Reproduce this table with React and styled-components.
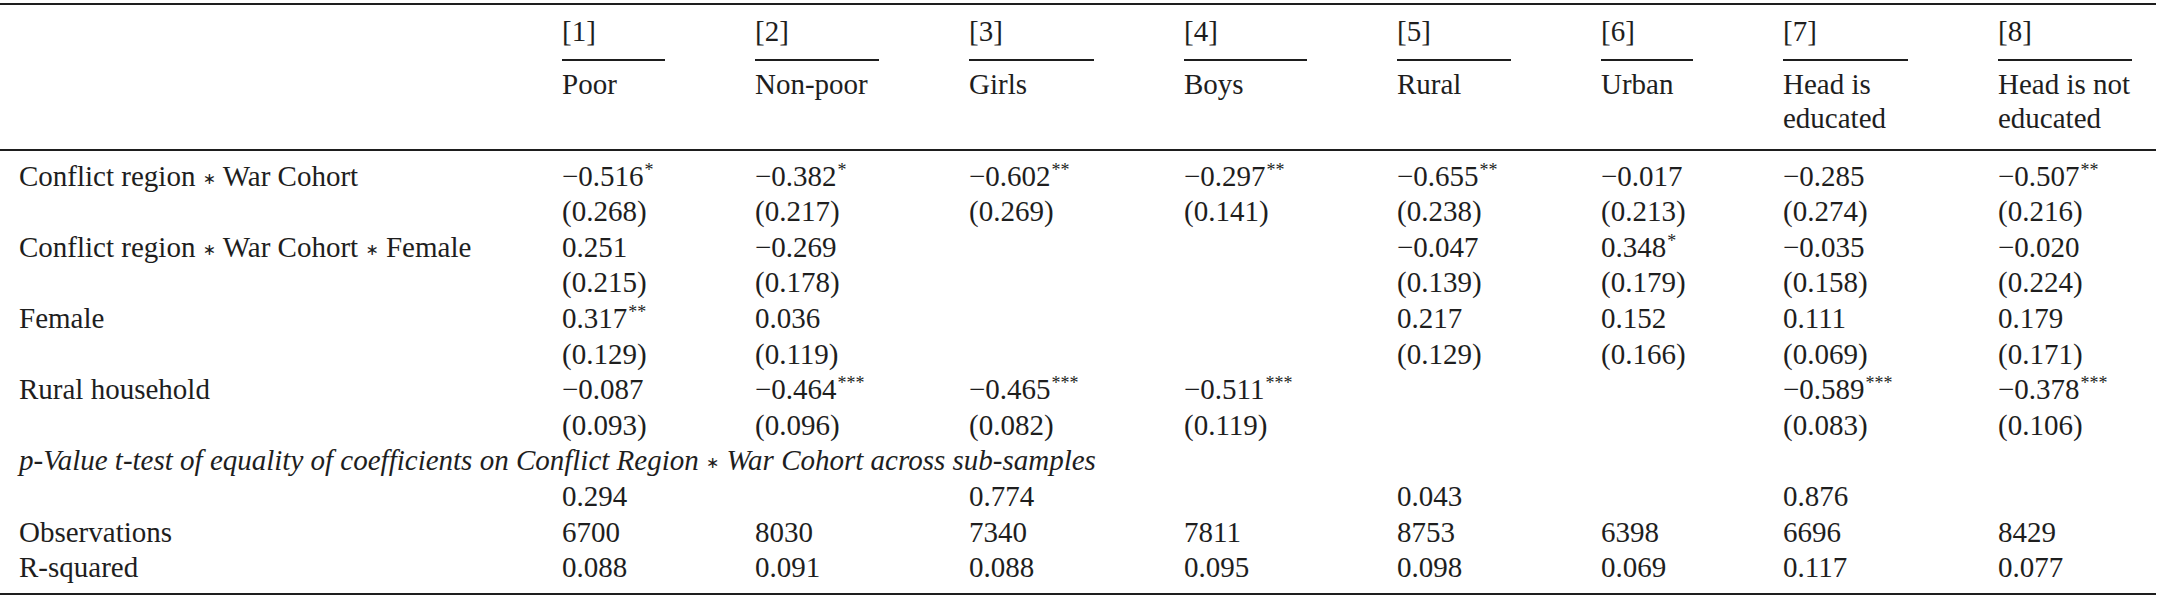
import styled, { createGlobalStyle } from "styled-components";

const GlobalStyle = createGlobalStyle`
  html, body {
    margin: 0;
    padding: 0;
    background: #ffffff;
  }
`;

const columns = [
  { num: "[1]", lines: ["Poor"], width: 103 },
  { num: "[2]", lines: ["Non-poor"], width: 124 },
  { num: "[3]", lines: ["Girls"], width: 125 },
  { num: "[4]", lines: ["Boys"], width: 123 },
  { num: "[5]", lines: ["Rural"], width: 114 },
  { num: "[6]", lines: ["Urban"], width: 92 },
  { num: "[7]", lines: ["Head is", "educated"], width: 125 },
  { num: "[8]", lines: ["Head is not", "educated"], width: 134 },
];

const template = `472px ${columns.map((c) => c.width + "px").join(" ")}`;

// each value is [number, stars]
const rows = [
  {
    label: ["Conflict region", "War Cohort"],
    values: [["−0.516", 1], ["−0.382", 1], ["−0.602", 2], ["−0.297", 2], ["−0.655", 2], ["−0.017"], ["−0.285"], ["−0.507", 2]],
  },
  { values: [["(0.268)"], ["(0.217)"], ["(0.269)"], ["(0.141)"], ["(0.238)"], ["(0.213)"], ["(0.274)"], ["(0.216)"]] },
  {
    label: ["Conflict region", "War Cohort", "Female"],
    values: [["0.251"], ["−0.269"], [""], [""], ["−0.047"], ["0.348", 1], ["−0.035"], ["−0.020"]],
  },
  { values: [["(0.215)"], ["(0.178)"], [""], [""], ["(0.139)"], ["(0.179)"], ["(0.158)"], ["(0.224)"]] },
  {
    label: ["Female"],
    values: [["0.317", 2], ["0.036"], [""], [""], ["0.217"], ["0.152"], ["0.111"], ["0.179"]],
  },
  { values: [["(0.129)"], ["(0.119)"], [""], [""], ["(0.129)"], ["(0.166)"], ["(0.069)"], ["(0.171)"]] },
  {
    label: ["Rural household"],
    values: [["−0.087"], ["−0.464", 3], ["−0.465", 3], ["−0.511", 3], [""], [""], ["−0.589", 3], ["−0.378", 3]],
  },
  { values: [["(0.093)"], ["(0.096)"], ["(0.082)"], ["(0.119)"], [""], [""], ["(0.083)"], ["(0.106)"]] },
  {
    span: ["p-Value t-test of equality of coefficients on Conflict Region", "War Cohort across sub-samples"],
  },
  { values: [["0.294"], [""], ["0.774"], [""], ["0.043"], [""], ["0.876"], [""]] },
  {
    label: ["Observations"],
    values: [["6700"], ["8030"], ["7340"], ["7811"], ["8753"], ["6398"], ["6696"], ["8429"]],
  },
  {
    label: ["R-squared"],
    values: [["0.088"], ["0.091"], ["0.088"], ["0.095"], ["0.098"], ["0.069"], ["0.117"], ["0.077"]],
  },
];

// joins label parts with the small centred product star
function Product({ parts }) {
  return parts.map((p, i) => (
    <span key={i}>
      {i > 0 && (
        <>
          {" "}
          <Op>∗</Op>{" "}
        </>
      )}
      {p}
    </span>
  ));
}

export default function App() {
  return (
    <>
      <GlobalStyle />
      <Table>
        <Header>
          <HeadLabel />
          {columns.map((c) => (
            <HeadCell key={c.num}>
              <HeadNum>{c.num}</HeadNum>
              <HeadRule />
              <HeadCaption>
                {c.lines.map((l) => (
                  <div key={l}>{l}</div>
                ))}
              </HeadCaption>
            </HeadCell>
          ))}
        </Header>
        <Body>
          {rows.map((r, i) =>
            r.span ? (
              <SpanRow key={i}>
                <Product parts={r.span} />
              </SpanRow>
            ) : (
              <Row key={i}>
                <Label>{r.label ? <Product parts={r.label} /> : ""}</Label>
                {r.values.map(([v, stars], j) => (
                  <Cell key={j}>
                    {v}
                    {stars ? <Stars>{"*".repeat(stars)}</Stars> : null}
                  </Cell>
                ))}
              </Row>
            )
          )}
        </Body>
      </Table>
    </>
  );
}

const Table = styled.div`
  width: 2156px;
  font-family: "Liberation Serif", "Times New Roman", serif;
  font-size: 29px;
  color: #1e1e1e;
  border-top: 2px solid #1e1e1e;
  border-bottom: 2px solid #1e1e1e;
  margin-top: 3px;
  box-sizing: border-box;
`;

const Header = styled.div`
  display: grid;
  grid-template-columns: ${template};
  column-gap: 90px;
  padding: 9px 0 14px;
  border-bottom: 2px solid #1e1e1e;
`;

const HeadLabel = styled.div``;

const HeadCell = styled.div`
  display: flex;
  flex-direction: column;
`;

const HeadNum = styled.div`
  line-height: 35.6px;
`;

const HeadRule = styled.div`
  height: 2px;
  background: #1e1e1e;
  margin: 9px 0 6px;
`;

const HeadCaption = styled.div`
  line-height: 34px;
`;

const Body = styled.div`
  padding: 8px 0 7px;
`;

const Row = styled.div`
  display: grid;
  grid-template-columns: ${template};
  column-gap: 90px;
  line-height: 35.6px;
  white-space: nowrap;
`;

const Label = styled.div`
  padding-left: 19px;
`;

const Cell = styled.div``;

const Op = styled.span`
  font-family: "DejaVu Sans", sans-serif;
  font-style: normal;
  font-size: 0.55em;
  vertical-align: 0.12em;
  line-height: 0;
`;

const Stars = styled.span`
  font-size: 0.62em;
  vertical-align: 0.55em;
  line-height: 0;
  margin-left: 1px;
`;

const SpanRow = styled.div`
  padding-left: 19px;
  line-height: 35.6px;
  font-style: italic;
  white-space: nowrap;
`;
